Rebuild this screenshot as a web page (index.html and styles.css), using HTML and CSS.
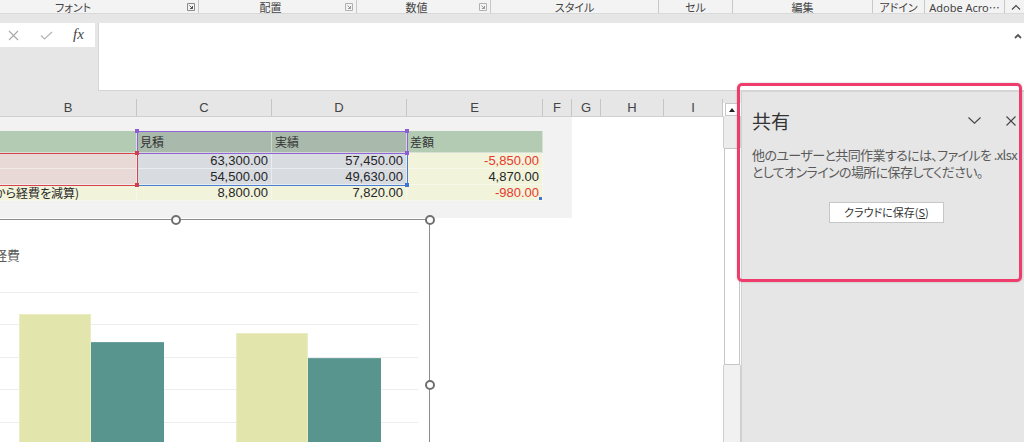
FILE: index.html
```html
<!DOCTYPE html>
<html lang="ja">
<head>
<meta charset="utf-8">
<title>Excel 共有</title>
<link rel="stylesheet" href="styles.css">
</head>
<body>
<div class="app">
  <div class="ribbon">
    <div class="rg rg-1"><span class="rg-label">フォント</span><span class="launch"><svg width="8" height="8" viewBox="0 0 8 8"><path d="M0.5 0.5h7v7h-7z" fill="none" stroke="#8a8a8a"/><path d="M2.5 2.5l3 3M5.5 3v2.5H3" fill="none" stroke="#555"/></svg></span></div>
    <div class="rg rg-2"><span class="rg-label">配置</span><span class="launch"><svg width="8" height="8" viewBox="0 0 8 8"><path d="M0.5 0.5h7v7h-7z" fill="none" stroke="#b0b0b0"/><path d="M2.5 2.5l3 3M5.5 3v2.5H3" fill="none" stroke="#9a9a9a"/></svg></span></div>
    <div class="rg rg-3"><span class="rg-label">数値</span><span class="launch"><svg width="8" height="8" viewBox="0 0 8 8"><path d="M0.5 0.5h7v7h-7z" fill="none" stroke="#b0b0b0"/><path d="M2.5 2.5l3 3M5.5 3v2.5H3" fill="none" stroke="#9a9a9a"/></svg></span></div>
    <div class="rg rg-4"><span class="rg-label">スタイル</span></div>
    <div class="rg rg-5"><span class="rg-label">セル</span></div>
    <div class="rg rg-6"><span class="rg-label">編集</span></div>
    <div class="rg rg-7"><span class="rg-label">アドイン</span></div>
    <div class="rg rg-8"><span class="rg-label latin">Adobe Acro⋯</span></div>
    <div class="rg-collapse"><svg width="10" height="6" viewBox="0 0 10 6"><path d="M1 5.5L5 1.5L9 5.5" fill="none" stroke="#444" stroke-width="1.1"/></svg></div>
  </div>
  <div class="ribbon-gap"></div>

  <div class="formula-row">
    <div class="fx-col">
      <div class="fx-box">
        <svg class="ic-x" width="11" height="11" viewBox="0 0 11 11"><path d="M1 1L10 10M10 1L1 10" stroke="#a8a8a8" stroke-width="1.1"/></svg>
        <svg class="ic-check" width="13" height="9" viewBox="0 0 13 9"><path d="M1 4.5L4.5 8L12 1" fill="none" stroke="#b4b4b4" stroke-width="1.2"/></svg>
        <span class="ic-fx">fx</span>
      </div>
    </div>
    <div class="formula-input">
      <svg class="fi-collapse" width="8" height="6" viewBox="0 0 8 6"><path d="M1 5L4 2L7 5" fill="none" stroke="#555" stroke-width="1.8"/></svg>
    </div>
  </div>

  <div class="main">
    <div class="sheet">
      <div class="colheads">
        <div class="ch">B</div>
        <div class="ch">C</div>
        <div class="ch">D</div>
        <div class="ch">E</div>
        <div class="ch">F</div>
        <div class="ch">G</div>
        <div class="ch">H</div>
        <div class="ch">I</div>
      </div>
      <div class="cells">
        <div class="band">
          <div class="table">
            <div class="c hd hd-g"></div>
            <div class="c hd hd-s">見積</div>
            <div class="c hd hd-s">実績</div>
            <div class="c hd hd-g">差額</div>

            <div class="c r-pink"></div>
            <div class="c r-sel num">63,300.00</div>
            <div class="c r-sel num">57,450.00</div>
            <div class="c r-y num neg">-5,850.00</div>

            <div class="c r-pink"></div>
            <div class="c r-sel num">54,500.00</div>
            <div class="c r-sel num">49,630.00</div>
            <div class="c r-y num">4,870.00</div>

            <div class="c r-y txt">から経費を減算)</div>
            <div class="c r-y num">8,800.00</div>
            <div class="c r-y num">7,820.00</div>
            <div class="c r-y num neg">-980.00</div>

            <div class="sel sel-blue"></div>
            <div class="sel sel-purple"></div>
            <div class="sel sel-red"></div>
            <span class="hdl hp h-p1"></span>
            <span class="hdl hp h-p2"></span>
            <span class="hdl hp h-p3"></span>
            <span class="hdl hb h-b1"></span>
            <span class="hdl hr h-r1"></span>
            <span class="hdl hr h-r2"></span>
            <span class="hdl hb h-fill"></span>
          </div>
        </div>
        <div class="chart-wrap">
          <div class="chart">
            <div class="chart-title">経費</div>
            <div class="plot">
              <div class="bar-group">
                <div class="bar bar-y" style="height:128px"></div>
                <div class="bar bar-t" style="height:100px"></div>
              </div>
              <div class="bar-group">
                <div class="bar bar-y" style="height:109px"></div>
                <div class="bar bar-t" style="height:84px"></div>
              </div>
            </div>
          </div>
          <span class="ch-h ch-h1"></span>
          <span class="ch-h ch-h2"></span>
          <span class="ch-h ch-h3"></span>
        </div>
      </div>
    </div>

    <div class="vscroll">
      <div class="vs-top"></div>
      <div class="vs-up"><span class="tri"></span></div>
      <div class="vs-track1"></div>
      <div class="vs-thumb"></div>
      <div class="vs-track2"></div>
    </div>

    <div class="pane">
      <div class="pane-head">
        <span class="pane-title">共有</span>
        <svg class="pane-chev" width="13" height="7" viewBox="0 0 13 7"><path d="M0.5 0.5L6.5 6.2L12.5 0.5" fill="none" stroke="#444" stroke-width="1.1"/></svg>
        <svg class="pane-close" width="10" height="10" viewBox="0 0 10 10"><path d="M0.5 0.5L9.5 9.5M9.5 0.5L0.5 9.5" stroke="#444" stroke-width="1.1"/></svg>
      </div>
      <p class="pane-text">他のユーザーと共同作業するには、ファイルを .xlsx<br>としてオンラインの場所に保存してください。</p>
      <div class="pane-actions">
        <button class="btn">クラウドに保存(<u>S</u>)</button>
      </div>
    </div>
  </div>

  <div class="annot"></div>
</div>
</body>
</html>
```

FILE: styles.css
```css
* { box-sizing: border-box; }
html, body { margin: 0; padding: 0; }
body {
  width: 1024px;
  height: 442px;
  overflow: hidden;
  background: #fff;
  font-family: "Noto Sans CJK JP", "Noto Sans", sans-serif;
  color: #333;
}
.app { position: relative; width: 1024px; height: 442px; overflow: hidden; }

/* ribbon group labels */
.ribbon {
  display: flex;
  align-items: flex-start;
  height: 14px;
  background: #f3f3f3;
  box-shadow: inset 0 -1px 0 #d9d9d9;
  font-size: 11px;
  color: #444;
  font-feature-settings: "palt";
}
.rg { display: flex; align-items: center; height: 13px; flex: none; border-right: 1px solid #c8c8c8; overflow: visible; }
.rg-label { flex: 1; text-align: center; white-space: nowrap; line-height: 15px; align-self: flex-start; }
.rg-label.latin { font-family: "Noto Sans", "Noto Sans CJK JP", sans-serif; font-size: 11px; }
.launch { width: 14px; display: flex; justify-content: center; align-items: center; }
.rg-1 { width: 237px; margin-left: -38px; }
.rg-2 { width: 158px; }
.rg-3 { width: 134px; }
.rg-4 { width: 168px; }
.rg-5 { width: 74px; }
.rg-6 { width: 140px; }
.rg-7 { width: 52px; }
.rg-8 { width: 80px; }
.rg-collapse { flex: 1; height: 13px; display: flex; justify-content: center; align-items: center; padding-left: 2px; }
.ribbon-gap { height: 9px; background: #e6e6e6; }

/* formula bar */
.formula-row { display: flex; height: 68px; background: #e6e6e6; }
.fx-col { width: 95px; flex: none; }
.fx-box { height: 24px; background: #fff; position: relative; }
.ic-x { position: absolute; left: 8px; top: 7px; }
.ic-check { position: absolute; left: 40px; top: 8px; }
.ic-fx {
  position: absolute; left: 73px; top: 2px;
  font-family: "Liberation Serif", serif; font-style: italic;
  font-size: 15px; line-height: 18px; color: #444;
}
.formula-input {
  margin-left: 3px;
  flex: 1;
  background: #fff;
  border-left: 1px solid #d4d4d4;
  border-bottom: 1px solid #d4d4d4;
  display: flex;
  justify-content: flex-end;
  align-items: flex-start;
  padding: 10px 2px 0 0;
}

/* main */
.main { display: flex; height: 351px; }
.sheet { width: 723px; flex: none; display: flex; flex-direction: column; }

.colheads {
  display: grid;
  grid-template-columns: 137px 135px 135px 136px 29px 29px 63px 59px;
  height: 26px;
  padding-top: 8px;
  background: #e6e6e6;
  border-bottom: 1px solid #d0d0d0;
}
.ch {
  border-right: 1px solid #c6c6c6;
  text-align: center;
  font-family: "Liberation Sans", sans-serif;
  font-size: 13px;
  line-height: 17px;
  color: #444;
}

.cells { flex: 1; background: #fff; overflow: hidden; }
.band { width: 572px; height: 101px; background: #f2f2f2; padding-top: 14px; }

.table {
  position: relative;
  display: grid;
  grid-template-columns: 137px 135px 135px 136px;
  grid-template-rows: 22px 16px 16px 16px;
  width: 543px;
}
.c {
  white-space: nowrap;
  overflow: hidden;
  padding: 0 3px;
  color: #262626;
  border-right: 1px solid rgba(255,255,255,0.45);
  border-bottom: 1px solid rgba(255,255,255,0.45);
}
.hd { font-size: 12px; line-height: 22px; color: #333; padding-left: 3px; }
.hd-g { background: #b3cbb3; }
.hd-s { background: #a9b9ab; }
.r-pink { background: #e8d9d7; }
.r-sel { background: #d8dce1; }
.r-y { background: #f1f3da; }
.num {
  text-align: right;
  font-family: "Liberation Sans", sans-serif;
  font-size: 13px;
  line-height: 16px;
}
.neg { color: #e8382b; }
.txt { font-size: 12px; line-height: 16px; text-indent: -9px; font-feature-settings: "palt"; }

.sel { position: absolute; border: 1px solid; pointer-events: none; }
.sel-purple { left: 137px; top: 0; width: 271px; height: 23px; border-color: #9163d8; }
.sel-blue { left: 137px; top: 22px; width: 271px; height: 33px; border-color: #4a7fd6; }
.sel-red { left: -3px; top: 22px; width: 141px; height: 33px; border-color: #d6434e; }
.hdl { position: absolute; width: 4px; height: 4px; }
.hp { background: #8e5cd6; }
.hb { background: #3f76d2; }
.hr { background: #d23d49; }
.h-p1 { left: 135px; top: -2px; }
.h-p2 { left: 405px; top: -2px; }
.h-p3 { left: 405px; top: 20px; }
.h-b1 { left: 405px; top: 52px; }
.h-r1 { left: 135px; top: 20px; }
.h-r2 { left: 135px; top: 52px; }
.h-fill { left: 539px; top: 66px; width: 3px; height: 3px; }

/* chart */
.chart-wrap { position: relative; width: 430px; height: 224px; margin-top: 1px; }
.chart {
  width: 430px;
  height: 100%;
  background: #fff;
  border-top: 1px solid #8c8c8c;
  border-right: 1px solid #8c8c8c;
  overflow: hidden;
}
.chart-title {
  padding-top: 26px;
  margin-left: -6px;
  font-size: 13px;
  line-height: 17px;
  color: #595959;
}
.plot {
  margin-top: 13px;
  width: 418px;
  height: 166px;
  display: flex;
  align-items: flex-end;
  padding-left: 19px;
  background-image: repeating-linear-gradient(to bottom,
    transparent 0, transparent 16px,
    #ededed 16px, #ededed 17px,
    transparent 17px, transparent 32.4px);
}
.bar-group { display: flex; align-items: flex-end; }
.bar-group + .bar-group { margin-left: 72px; }
.bar { width: 72px; }
.bar-t { width: 73px; background: #58958f; border-top: 1px solid #6aa39d; }
.bar-y { background: #e2e6ad; border: 1px solid #eaedc4; border-bottom: none; }

.ch-h {
  position: absolute;
  width: 10px;
  height: 10px;
  border: 2px solid #707070;
  border-radius: 50%;
  background: #fff;
}
.ch-h1 { left: 171px; top: -4px; }
.ch-h2 { left: 425px; top: -4px; }
.ch-h3 { left: 425px; top: 161px; }

/* vertical scrollbar */
.vscroll { width: 18px; flex: none; display: flex; flex-direction: column; }
.vs-top { height: 12px; background: #e6e6e6; }
.vs-up {
  height: 13px;
  margin: 0 3px 0 2px;
  background: #fff;
  border: 1px solid #c8c8c8;
  display: flex;
  justify-content: center;
  align-items: center;
}
.tri {
  width: 0; height: 0;
  border-left: 3px solid transparent;
  border-right: 3px solid transparent;
  border-bottom: 4px solid #222;
}
.vs-track1 { height: 32px; background: #ececec; border-left: 1px solid #cfcfcf; border-right: 1px solid #cfcfcf; }
.vs-thumb { height: 217px; background: #fff; border: 1px solid #c6c6c6; margin: 0 1px 0 1px; }
.vs-track2 { flex: 1; background: #f1f1f1; border-left: 1px solid #cfcfcf; border-right: 1px solid #cfcfcf; }

/* share pane */
.pane {
  flex: 1;
  min-width: 0;
  overflow: hidden;
  background: #e6e6e6;
  border-left: 1px solid #d2d2d2;
  border-top: 1px solid #d6d6d6;
}
.pane-head {
  display: flex;
  align-items: center;
  height: 23px;
  margin-top: 17px;
  padding: 0 8px 0 10px;
}
.pane-title { font-size: 19px; line-height: 23px; color: #333; }
.pane-chev { margin-left: auto; }
.pane-close { margin-left: 25px; }
.pane-text {
  margin: 14px 0 0 0;
  padding-left: 10px;
  font-size: 13px;
  line-height: 17px;
  letter-spacing: -0.6px;
  color: #5a5a5a;
  font-feature-settings: "palt";
  white-space: nowrap;
}
.pane-actions {
  display: flex;
  justify-content: center;
  padding: 0 3px 0 10px;
  margin-top: 22px;
}
.btn {
  width: 115px;
  height: 21px;
  background: #fff;
  border: 1px solid #c6c6c6;
  border-radius: 0;
  font-family: "Noto Sans CJK JP", sans-serif;
  font-size: 11px;
  line-height: 19px;
  color: #333;
  padding: 0;
  font-feature-settings: "palt";
}

/* highlight annotation */
.annot {
  position: absolute;
  left: 737px;
  top: 83px;
  width: 285px;
  height: 199px;
  border: 3px solid #ee3d6c;
  border-radius: 5px;
  box-shadow: 0 0 2px rgba(0,0,0,0.25);
  pointer-events: none;
}
```
